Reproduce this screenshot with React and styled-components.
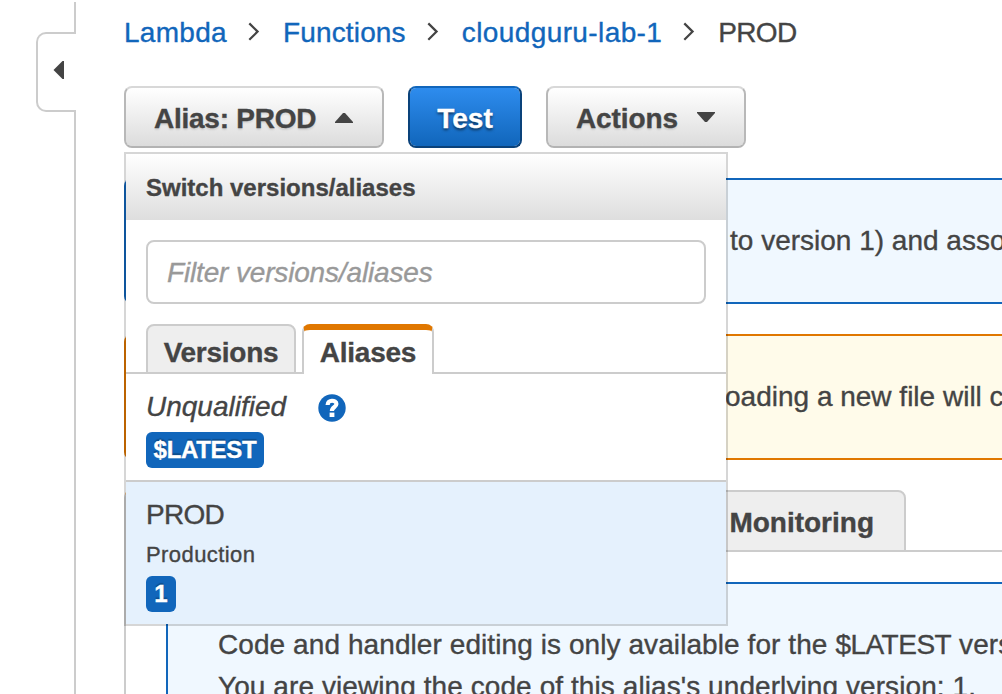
import React from "react";
import styled, { createGlobalStyle, css } from "styled-components";

const GlobalStyle = createGlobalStyle`
  * { box-sizing: border-box; }
  html, body { margin: 0; padding: 0; overflow: hidden; background: #fff; }
  body {
    font: 28px/32px "Liberation Sans", Arial, Helvetica, sans-serif;
    color: #444;
    font-kerning: normal;
    -webkit-text-stroke: 0.35px currentColor;
  }
`;

const Page = styled.div`
  display: flex;
  width: 100vw;
  height: 100vh;
  overflow: hidden;
`;

/* Collapsed navigation rail */
const Rail = styled.div`
  flex: none;
  width: 76px;
  display: flex;
  flex-direction: column;
  align-items: flex-end;
  padding-top: 2px;
`;
const RailLine = styled.div`
  width: 2px;
  background: #ccc;
  ${(p) => (p.$height ? `height: ${p.$height}px;` : "flex: 1;")}
`;
const RailHandle = styled.button`
  width: 40px;
  height: 80px;
  padding: 0 0 4px 15px;
  display: flex;
  align-items: center;
  background: #fff;
  border: 2px solid #ccc;
  border-right: 0;
  border-radius: 10px 0 0 10px;
`;

const Main = styled.main`
  flex: 1;
  min-width: 0;
  padding: 17px 0 0 48px;
  overflow: hidden;
`;

const Breadcrumb = styled.nav`
  display: flex;
  height: 32px;
  margin-bottom: 37px;
  white-space: nowrap;
`;
const Crumb = styled.span`
  color: ${(p) => (p.$current ? "#444" : "#1166bb")};
  letter-spacing: ${(p) => p.$track || 0}px;
`;
const Chevron = styled.svg`
  flex: none;
  width: 12px;
  height: 20px;
  margin: 4px 23px 0 21px;
`;

const Toolbar = styled.div`
  display: flex;
  gap: 24px;
  height: 62px;
  margin-bottom: 30px;
`;
const Anchor = styled.div`
  position: relative;
`;
const Button = styled.button`
  display: flex;
  align-items: center;
  justify-content: ${(p) => (p.$primary ? "center" : "flex-start")};
  width: ${(p) => p.$width}px;
  height: 62px;
  padding: 3px 0 0 ${(p) => (p.$primary ? 0 : 28)}px;
  font: bold 28px/32px "Liberation Sans", Arial, sans-serif;
  letter-spacing: ${(p) => p.$track || 0}px;
  border: 2px solid;
  border-radius: 8px;
  white-space: nowrap;
  ${(p) =>
    p.$primary
      ? css`
          color: #fff;
          background: linear-gradient(#2e8cee, #1166bb) padding-box;
          border-color: #1166bb #0a427a #0a427a;
          text-shadow: 0 2px 3px rgba(0, 0, 0, 0.6);
        `
      : css`
          color: #444;
          background: linear-gradient(#fff, #dcdcdc) padding-box;
          border-color: #d8d8d8 #b8b8b8 #b3b3b3;
          text-shadow: 0 2px 2px rgba(0, 0, 0, 0.1);
        `}
`;
const Caret = styled.svg`
  width: 18px;
  height: 10px;
  margin: ${(p) => p.$m};
`;

/* Version / alias picker */
const Menu = styled.section`
  position: absolute;
  z-index: 2;
  top: 66px;
  left: 0;
  width: 604px;
  height: 474px;
  border: 2px solid rgba(0, 0, 0, 0.16);
  background: #fff padding-box;
  background-clip: padding-box;
`;
const MenuHeader = styled.header`
  height: 66px;
  padding: 1px 20px 0;
  font: bold 24px/66px "Liberation Sans", Arial, sans-serif;
  background: linear-gradient(#fff, #dedede);
`;
const Filter = styled.input`
  display: block;
  width: 560px;
  height: 64px;
  margin: 20px 20px 20px;
  padding: 2px 19px 0;
  border: 2px solid #ccc;
  border-radius: 8px;
  outline: 0;
  background: #fff;
  font: italic 28px/32px "Liberation Sans", Arial, sans-serif;
  &::placeholder {
    color: #999;
    opacity: 1;
    letter-spacing: -0.16px;
  }
`;
const Tabs = styled.div`
  display: flex;
  gap: 6px;
  height: 50px;
  padding-left: 20px;
  background: linear-gradient(#ccc, #ccc) 0 100% / 100% 2px no-repeat;
`;
const Tab = styled.div`
  width: ${(p) => p.$width}px;
  height: 50px;
  border: 2px solid #ccc;
  border-radius: 8px 8px 0 0;
  background: #eee;
  text-align: center;
  font: bold 28px/54px "Liberation Sans", Arial, sans-serif;
  letter-spacing: -0.25px;
  overflow: hidden;
  ${(p) =>
    p.$active &&
    css`
      background: #fff;
      border-top: 6px solid #e07700;
      border-bottom: 0;
      line-height: 46px;
    `}
`;
const Option = styled.div`
  display: flex;
  flex-direction: column;
  align-items: flex-start;
  padding: 16px 20px 12px;
  height: ${(p) => p.$height}px;
  background: ${(p) => (p.$selected ? "#e5f1fd" : "#fff")};
  border-bottom: ${(p) => (p.$selected ? "0" : "2px solid #ccc")};
`;
const OptionName = styled.div`
  display: flex;
  align-items: flex-start;
  height: 32px;
  line-height: 33px;
  font-style: ${(p) => (p.$italic ? "italic" : "normal")};
  letter-spacing: ${(p) => p.$track || 0}px;
`;
const Description = styled.div`
  height: 28px;
  margin: 10px 0 8px;
  font-size: 22px;
  line-height: 29px;
  letter-spacing: 0.42px;
`;
const HelpIcon = styled.svg`
  width: 28px;
  height: 28px;
  margin: 4px 0 0 32px;
`;
const Badge = styled.span`
  width: ${(p) => p.$width}px;
  height: 36px;
  margin-top: ${(p) => p.$top || 0}px;
  border-radius: 6px;
  background: #1166bb;
  color: #fff;
  text-align: center;
  font: bold 24px/35px "Liberation Sans", Arial, sans-serif;
  letter-spacing: ${(p) => p.$track || 0}px;
  text-shadow: 0 -2px 1px rgba(0, 0, 0, 0.25);
`;

const tones = {
  info: ["#1166bb", "#f0f8ff"],
  warning: ["#e07700", "#fffbea"],
};
const Alert = styled.div`
  height: ${(p) => p.$height || 126}px;
  margin-bottom: 30px;
  padding: ${(p) => p.$pad};
  border: 2px solid ${(p) => tones[p.$tone][0]};
  border-right: 0;
  border-radius: 8px 0 0 8px;
  background: ${(p) => tones[p.$tone][1]};
  line-height: 42px;
  white-space: nowrap;
  overflow: hidden;
`;
const Line = styled.div`
  letter-spacing: ${(p) => p.$track || 0}px;
`;
const Code = styled.span`
  letter-spacing: -0.5px;
`;

const PageTabs = styled.div`
  display: flex;
  gap: 6px;
  height: 62px;
  background: linear-gradient(#ccc, #ccc) 0 100% / 100% 2px no-repeat;
`;
const PageTab = styled.div`
  width: ${(p) => p.$width}px;
  height: 62px;
  padding-right: 30px;
  border: 2px solid #ccc;
  border-radius: 8px 8px 0 0;
  background: #eee;
  text-align: right;
  font: bold 28px/61px "Liberation Sans", Arial, sans-serif;
  ${(p) =>
    p.$active &&
    css`
      background: #fff;
      border-top: 6px solid #e07700;
      border-bottom: 0;
    `}
`;
const TabPanel = styled.div`
  height: 200px;
  padding: 30px 0 0 40px;
  border-left: 2px solid #ccc;
`;

const Separator = () => (
  <Chevron viewBox="0 0 12 20" fill="none" stroke="#444" strokeWidth="2.2">
    <path d="M1.3 2.4L9.6 10.6L1.3 18.8" />
  </Chevron>
);

export default function App() {
  return (
    <>
      <GlobalStyle />
      <Page>
        <Rail>
          <RailLine $height={30} />
          <RailHandle aria-label="Expand navigation">
            <svg width="11" height="18" viewBox="0 0 11 18">
              <path d="M0.5 9L9.5 0H11V18H9.5Z" fill="#444" />
            </svg>
          </RailHandle>
          <RailLine />
        </Rail>
        <Main>
          <Breadcrumb>
            <Crumb $track={0.3}>Lambda</Crumb>
            <Separator />
            <Crumb $track={0.15}>Functions</Crumb>
            <Separator />
            <Crumb $track={0.4}>cloudguru-lab-1</Crumb>
            <Separator />
            <Crumb $current $track={-0.7}>PROD</Crumb>
          </Breadcrumb>

          <Toolbar>
            <Anchor>
              <Button $width={260} $track={-0.25}>
                Alias: PROD
                <Caret viewBox="0 0 18 10" $m="0 0 2px 19px">
                  <path d="M0 10V9L8 0H10L18 9V10Z" fill="#444" />
                </Caret>
              </Button>
              <Menu>
                <MenuHeader>Switch versions/aliases</MenuHeader>
                <Filter placeholder="Filter versions/aliases" />
                <Tabs>
                  <Tab $width={150}>Versions</Tab>
                  <Tab $width={132} $active>
                    Aliases
                  </Tab>
                </Tabs>
                <Option $height={108}>
                  <OptionName $italic>
                    Unqualified
                    <HelpIcon viewBox="0 0 28 28">
                      <circle cx="14" cy="14" r="13.7" fill="#1166bb" />
                      <path
                        d="M9.6 11C9.4 5.4 18.4 5.6 18.4 10.1C18.4 13.2 13.9 12.8 13.9 17"
                        fill="none"
                        stroke="#fff"
                        strokeWidth="4.2"
                      />
                      <rect x="11.6" y="18.6" width="4.8" height="4.4" fill="#fff" />
                    </HelpIcon>
                  </OptionName>
                  <Badge $width={118} $top={10} $track={-0.3}>
                    $LATEST
                  </Badge>
                </Option>
                <Option $height={142} $selected>
                  <OptionName $track={-0.7}>PROD</OptionName>
                  <Description>Production</Description>
                  <Badge $width={30}>1</Badge>
                </Option>
              </Menu>
            </Anchor>
            <Button $width={114} $primary>
              Test
            </Button>
            <Button $width={200} $track={-0.1}>
              Actions
              <Caret viewBox="0 0 18 10" $m="0 0 4px 19px">
                <path d="M0 0V1L8 10H10L18 1V0Z" fill="#444" />
              </Caret>
            </Button>
          </Toolbar>

          <Alert $tone="info" $pad="40px 0 0 604px">
            <Line>to version 1) and associated</Line>
          </Alert>
          <Alert $tone="warning" $pad="40px 0 0 557px">
            <Line>Uploading a new file will change</Line>
          </Alert>

          <PageTabs>
            <PageTab $width={190} $active />
            <PageTab $width={586}>Monitoring</PageTab>
          </PageTabs>
          <TabPanel>
            <Alert $tone="info" $height={180} $pad="40px 0 0 50px">
              <Line $track={0.08}>
                Code and handler editing is only available for the <Code>$LATEST</Code> version.
              </Line>
              <Line $track={0.08}>You are viewing the code of this alias's underlying version: 1.</Line>
            </Alert>
          </TabPanel>
        </Main>
      </Page>
    </>
  );
}
